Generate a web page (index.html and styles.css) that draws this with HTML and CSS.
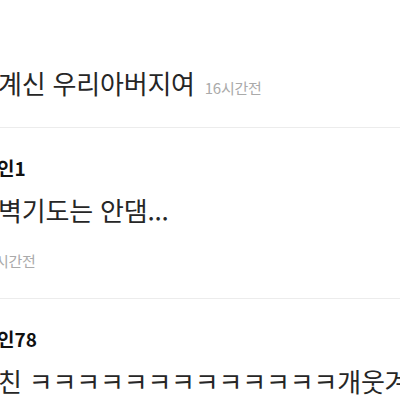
FILE: index.html
```html
<!DOCTYPE html>
<html lang="ko">
<head>
<meta charset="UTF-8">
<meta name="viewport" content="width=device-width, initial-scale=1.0">
<title>댓글</title>
<link rel="stylesheet" href="styles.css">
</head>
<body>
<div class="feed">
  <div class="post">
    <p class="text">계신 우리아버지여<span class="time inline">16시간전</span></p>
  </div>

  <div class="comment">
    <div class="nick">인1</div>
    <p class="text">벽기도는 안댐...</p>
    <div class="time">시간전</div>
  </div>

  <div class="comment">
    <div class="nick">인78</div>
    <p class="text">친 ㅋㅋㅋㅋㅋㅋㅋㅋㅋㅋㅋㅋㅋ개웃겨</p>
  </div>
</div>
</body>
</html>
```

FILE: styles.css
```css
body {
  margin: 0;
  padding: 0;
  background-color: #fff;
  font-family: "Noto Sans CJK KR", "Noto Sans", sans-serif;
  color: #262626;
}
.feed {
  width: 400px;
  height: 400px;
  overflow: hidden;
}
.post {
  padding: 66px 0 27px;
  border-bottom: 1px solid #ececec;
}
.comment {
  padding: 27px 0 27px;
  border-bottom: 1px solid #ececec;
}
.text {
  margin: 0 0 0 -2px;
  font-size: 26px;
  line-height: 34px;
  letter-spacing: -0.2px;
  white-space: nowrap;
}
.comment .text {
  margin-top: 12px;
}
.nick {
  margin-left: -3px;
  font-size: 19px;
  font-weight: 700;
  line-height: 26px;
  color: #111;
}
.time {
  margin: 24px 0 0 -5px;
  font-size: 15px;
  line-height: 20px;
  letter-spacing: -0.3px;
  color: #aaa;
}
.time.inline {
  margin: 0 0 0 10px;
}
```
